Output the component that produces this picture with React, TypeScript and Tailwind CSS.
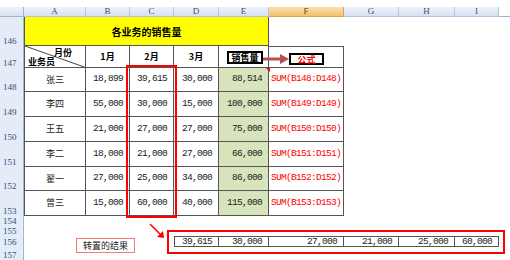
import React from 'react';

const cjk = "font-['Noto_Sans_CJK_SC',sans-serif]";
const mono = "font-['Liberation_Mono',monospace] text-[9.5px] tracking-[-0.7px]";

const colLetters = ['A', 'B', 'C', 'D', 'E', 'F', 'G', 'H', 'I'];

const rows = [
  { n: 148, name: '张三', b: '18,899', c: '39,615', d: '30,000', e: '88,514' },
  { n: 149, name: '李四', b: '55,000', c: '30,000', d: '15,000', e: '100,000' },
  { n: 150, name: '王五', b: '21,000', c: '27,000', d: '27,000', e: '75,000' },
  { n: 151, name: '李二', b: '18,000', c: '21,000', d: '27,000', e: '66,000' },
  { n: 152, name: '翟一', b: '27,000', c: '25,000', d: '34,000', e: '86,000' },
  { n: 153, name: '曾三', b: '15,000', c: '60,000', d: '40,000', e: '115,000' },
];

const transposed = ['39,615', '30,000', '27,000', '21,000', '25,000', '60,000'];

const RowNum: React.FC<{ n?: number }> = ({ n }) => (
  <div className="bg-[#e4ecf7] border-r border-[#9eb6ce] flex items-end pl-[3px] text-[9px] leading-[10px] text-[#34507a] font-['Liberation_Serif',serif]">
    {n}
  </div>
);

const Blank: React.FC = () => <div />;

const App: React.FC = () => {
  return (
    <div className="w-[510px] h-[260px] bg-white overflow-hidden relative">
      <div className="h-[7px]" />
      <div className="grid grid-cols-[24px_62px_44px_44px_45px_50px_75px_55px_56px_44px_1fr] grid-rows-[10px_29px_22px_24px_25px_25px_25px_24px_25px_10px_10px_11px_13px]">
        {/* column headers */}
        <div className="bg-linear-to-b from-[#eef3fa] to-[#d6e1f0] border-r border-b border-[#9eb6ce]" />
        {colLetters.map((l) => (
          <div
            key={l}
            className={`border-r border-b flex items-center justify-center text-[9px] leading-none font-['Liberation_Serif',serif] ${
              l === 'F'
                ? 'bg-linear-to-b from-[#fbe0ad] to-[#f4c06f] border-[#e2a34b] text-[#6b4a1a]'
                : 'bg-linear-to-b from-[#eef3fa] to-[#d6e1f0] border-[#b4c6dc] text-[#3a4f6c]'
            }`}
          >
            {l}
          </div>
        ))}
        <div className="border-b border-[#9eb6ce]" />

        {/* 146 title */}
        <RowNum n={146} />
        <div className={`col-span-5 bg-[#ffff00] border-l border-r border-b border-[#555] flex items-center justify-center text-[10px] font-bold text-black ${cjk}`}>
          各业务的销售量
        </div>
        <Blank />
        <Blank />
        <Blank />
        <Blank />
        <Blank />

        {/* 147 header */}
        <RowNum n={147} />
        <div className="relative border-l border-r border-b border-[#555] overflow-hidden">
          <svg className="absolute inset-0" width="62" height="22">
            <line x1="0" y1="0" x2="62" y2="22" stroke="#444" strokeWidth="1" />
          </svg>
          <span className={`absolute right-[13px] top-[1px] text-[9px] leading-[11px] font-bold ${cjk}`}>月份</span>
          <span className={`absolute left-[3px] bottom-0 text-[9px] leading-[11px] font-bold ${cjk}`}>业务员</span>
        </div>
        {['1月', '2月', '3月'].map((m) => (
          <div key={m} className={`border-r border-b border-[#555] flex items-center justify-center text-[9px] font-bold ${cjk}`}>
            {m}
          </div>
        ))}
        <div className="border-r border-b border-[#555]" />
        <div className="border-t border-r border-b border-[#555]" />
        <Blank />
        <Blank />
        <Blank />
        <Blank />

        {/* data rows */}
        {rows.map((r) => (
          <React.Fragment key={r.n}>
            <RowNum n={r.n} />
            <div className={`border-l border-r border-b border-[#555] flex items-center justify-center text-[9px] text-[#222] ${cjk}`}>
              {r.name}
            </div>
            {[r.b, r.c, r.d].map((v, i) => (
              <div key={i} className={`border-r border-b border-[#555] flex items-center justify-end pr-[6px] text-[#222] ${mono}`}>
                {v}
              </div>
            ))}
            <div className={`border-r border-b border-[#555] bg-[#d8e4bc] flex items-center justify-end pr-[6px] text-[#222] ${mono}`}>
              {r.e}
            </div>
            <div className={`border-r border-b border-[#555] flex items-center pl-[2px] text-[#f00] ${mono}`}>
              SUM(B{r.n}:D{r.n})
            </div>
            <Blank />
            <Blank />
            <Blank />
            <Blank />
          </React.Fragment>
        ))}

        {/* 154, 155 */}
        {[154, 155].map((n) => (
          <React.Fragment key={n}>
            <RowNum n={n} />
            {Array.from({ length: 10 }, (_, i) => (
              <Blank key={i} />
            ))}
          </React.Fragment>
        ))}

        {/* 156 */}
        <RowNum n={156} />
        <Blank />
        <Blank />
        <Blank />
        {transposed.map((v, i) => (
          <div
            key={i}
            className={`border-t border-r border-b border-[#555] ${i === 0 ? 'border-l' : ''} flex items-center justify-end pr-[6px] text-[#222] ${mono} leading-none`}
          >
            {v}
          </div>
        ))}
        <Blank />

        {/* 157 */}
        <RowNum n={157} />
        {Array.from({ length: 10 }, (_, i) => (
          <Blank key={i} />
        ))}
      </div>

      {/* drawn shapes over the sheet */}
      <div className="absolute left-[126px] top-[65px] w-[51px] h-[153px] border-2 border-[#f00]" />
      <div className="absolute left-[167px] top-[230px] w-[338px] h-[24px] border-2 border-[#f00]" />
      <div className="absolute left-[227px] top-[51px] w-[36px] h-[13px] border-2 border-black bg-white flex items-center justify-center">
        <span className={`text-[9px] leading-none font-bold text-black ${cjk}`}>销售量</span>
      </div>
      <div className="absolute left-[289px] top-[53px] w-[35px] h-[12px] border-2 border-black bg-white flex items-center justify-center">
        <span className={`text-[9px] leading-none font-bold text-[#f00] ${cjk}`}>公式</span>
      </div>
      <svg className="absolute left-[262px] top-[53px]" width="28" height="12">
        <line x1="1" y1="6" x2="20" y2="6" stroke="#b35252" strokeWidth="3" />
        <polygon points="18,1 27,6 18,11" fill="#b35252" />
      </svg>
      <svg className="absolute left-[266px] top-[68px]" width="4" height="4">
        <polygon points="0,0 4,0 4,4" fill="#f00" />
      </svg>
      <svg className="absolute left-[148px] top-[222px]" width="18" height="18">
        <line x1="2" y1="2" x2="13" y2="13" stroke="#f00" strokeWidth="1.5" />
        <polygon points="9,15 16,16 15,9" fill="#f00" />
      </svg>
      <div className="absolute left-[76px] top-[238px] w-[59px] h-[15px] border border-[#ee7a7a] bg-white flex items-center justify-center">
        <span className={`text-[9px] leading-none text-[#222] ${cjk}`}>转置的结果</span>
      </div>
    </div>
  );
};

export default App;
